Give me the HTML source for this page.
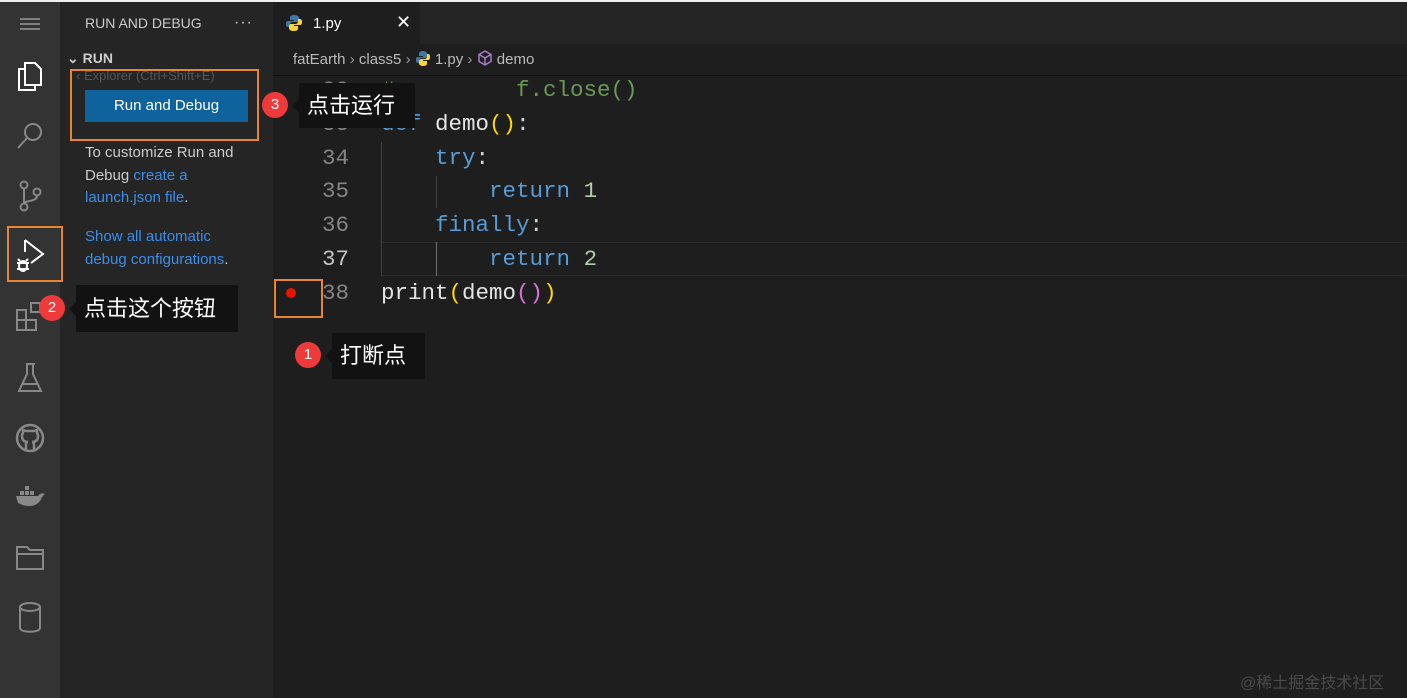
<!DOCTYPE html>
<html><head><meta charset="utf-8"><style>
*{margin:0;padding:0;box-sizing:border-box}
body{width:1407px;height:698px;overflow:hidden;background:#1e1e1e;font-family:"Liberation Sans","Noto Sans CJK SC",sans-serif;position:relative}
.top{position:absolute;left:0;top:0;width:1407px;height:2px;background:#f0f0f0}
.act{position:absolute;left:0;top:2px;width:60px;height:696px;background:#333333}
.side{position:absolute;left:60px;top:2px;width:213px;height:696px;background:#252526;color:#ccc}
.tabs{position:absolute;left:273px;top:2px;width:1134px;height:42px;background:#252526}
.tab{position:absolute;left:0;top:0;width:147px;height:42px;background:#1e1e1e;color:#fff;font-size:15px}
.crumb{position:absolute;left:293px;top:50px;color:#bbb;font-size:15px;white-space:nowrap}
.code{position:absolute;left:273px;top:76px;width:1134px;font-family:"Liberation Mono",monospace;font-size:22.5px}
.ln{position:absolute;left:0;width:76px;text-align:right;color:#858585;height:34px;line-height:34px}
.cl{position:absolute;left:108px;height:34px;line-height:34px;white-space:pre;color:#d4d4d4}
.kw{color:#569cd6}.fn{color:#e4e4e4}.y{color:#ffd700}.p{color:#da70d6}.n{color:#b5cea8}.c{color:#6a9955}
.ob{position:absolute;border:2px solid #e8862f}
.badge{position:absolute;width:26px;height:26px;border-radius:50%;background:#ee3a3a;color:#fff;font-size:15px;text-align:center;line-height:26px}
.tip{position:absolute;background:#121212;color:#fff;font-size:22px;padding:0 8px;font-family:"Liberation Sans","Noto Sans CJK SC",sans-serif}
.tip:before{content:"";position:absolute;left:-7px;top:50%;margin-top:-7px;border:7px solid transparent;border-left:0;border-right-color:#121212}
.ic{position:absolute;left:15px}
</style></head><body>
<div class="top"></div>
<div class="act">
 <svg class="ic" style="top:14px" width="30" height="16"><g stroke="#999" stroke-width="1.5"><line x1="5" y1="3" x2="25" y2="3"/><line x1="5" y1="8" x2="25" y2="8"/><line x1="5" y1="13" x2="25" y2="13"/></g></svg>
 <svg class="ic" style="top:56px" width="30" height="36" fill="none" stroke="#fff" stroke-width="2"><path d="M10 5h10l6 6v16H10z"/><path d="M10 11H4v21h16v-5"/></svg>
 <svg class="ic" style="top:116px" width="30" height="36" fill="none" stroke="#888" stroke-width="2"><circle cx="18" cy="14" r="8"/><line x1="12" y1="20" x2="3" y2="30"/></svg>
 <svg class="ic" style="top:176px" width="30" height="36" fill="none" stroke="#888" stroke-width="2"><circle cx="9" cy="7" r="3.5"/><circle cx="9" cy="29" r="3.5"/><circle cx="22" cy="14" r="3.5"/><path d="M9 11v14M22 18c0 6-13 4-13 8"/></svg>
 <svg class="ic" style="top:234px" width="34" height="40" fill="none" stroke="#fff" stroke-width="2"><path d="M10 4v12M10 4l18 14-12 9"/><ellipse cx="8" cy="30" rx="4" ry="5"/><path d="M2 27h12M2 33h12M5 25l-2-2M11 25l2-2"/></svg>
 <svg class="ic" style="top:298px" width="32" height="36" fill="none" stroke="#888" stroke-width="2"><path d="M2 10h9v10h10v10H2zM2 20h9v10"/><rect x="16" y="3" width="9" height="9"/></svg>
 <svg class="ic" style="top:358px" width="30" height="36" fill="none" stroke="#888" stroke-width="2"><path d="M11 4h9M12 4v10L4 31h22L18 14V4M7 24h16"/></svg>
 <svg class="ic" style="top:418px" width="32" height="36" fill="none" stroke="#888" stroke-width="2.5"><circle cx="15" cy="18" r="13"/><path d="M11 30v-5c0-2 1-3 2-3-4 0-6-2-6-6 0-1 0-2 1-3v-3l3 1h8l3-1v3c1 1 1 2 1 3 0 4-2 6-6 6 1 0 2 1 2 3v5"/></svg>
 <svg class="ic" style="top:480px" width="32" height="32"><path d="M1 14h22c2-3 5-3 7-2-2 1-2 3-3 3-3 9-13 12-24 6z" fill="#888"/><g fill="#888"><rect x="5" y="9" width="4" height="4"/><rect x="10" y="9" width="4" height="4"/><rect x="15" y="9" width="4" height="4"/><rect x="10" y="4" width="4" height="4"/></g></svg>
 <svg class="ic" style="top:538px" width="32" height="34" fill="none" stroke="#888" stroke-width="2"><path d="M2 7h10l3 3h13v19H2zM2 14h26"/></svg>
 <svg class="ic" style="top:598px" width="32" height="36" fill="none" stroke="#888" stroke-width="2"><ellipse cx="15" cy="7" rx="10" ry="4"/><path d="M5 7v21c0 5 20 5 20 0V7"/></svg>
</div>
<div class="side">
 <div style="position:absolute;left:25px;top:13px;font-size:14px;color:#ccc">RUN AND DEBUG</div>
 <div style="position:absolute;left:174px;top:12px;font-size:16px;color:#ccc;letter-spacing:1px">···</div>
 <div style="position:absolute;left:7px;top:48px;font-size:14px;font-weight:bold;color:#ccc">⌄ RUN</div>
 <div style="position:absolute;left:16px;top:66px;font-size:13px;color:#555">‹ Explorer (Ctrl+Shift+E)</div>
 <div style="position:absolute;left:25px;top:88px;width:163px;height:32px;background:#0e639c;color:#fff;font-size:15px;text-align:center;line-height:32px">Run and Debug</div>
 <div style="position:absolute;left:25px;top:140px;width:190px;font-size:15px;line-height:22.5px;color:#ccc;white-space:nowrap">To customize Run and<br>Debug <span style="color:#3b8eea">create a</span><br><span style="color:#3b8eea">launch.json file</span>.</div>
 <div style="position:absolute;left:25px;top:223px;width:190px;font-size:15px;line-height:23px;color:#3b8eea;white-space:nowrap">Show all automatic<br>debug configurations<span style="color:#ccc">.</span></div>
</div>
<div class="tabs"><div class="tab">
 <svg style="position:absolute;left:12px;top:12px" width="18" height="18"><path d="M9 1C5 1 5 3 5 4v2h4v1H3C1 7 1 9 1 10s0 3 2 3h2v-2c0-2 1-3 3-3h4c1 0 2-1 2-2V4c0-2-2-3-5-3z" fill="#3c78aa"/><path d="M9 17c4 0 4-2 4-3v-2H9v-1h6c2 0 2-2 2-3s0-3-2-3h-2v2c0 2-1 3-3 3H6c-1 0-2 1-2 2v2c0 2 2 3 5 3z" fill="#ffd43b"/></svg>
 <span style="position:absolute;left:40px;top:13px">1.py</span>
 <span style="position:absolute;left:123px;top:10px;font-size:18px">✕</span></div></div>
<div class="crumb">fatEarth <span style="color:#999">›</span> class5 <span style="color:#999">›</span> <svg width="16" height="16" style="vertical-align:-2px"><path d="M8 1C4 1 4 3 4 4v2h4v1H3C1 7 1 9 1 10s0 3 2 3h1v-2c0-2 1-3 3-3h3c1 0 2-1 2-2V4c0-2-2-3-4-3z" fill="#3c78aa"/><path d="M8 16c4 0 4-2 4-3v-2H8v-1h5c2 0 2-2 2-3s0-3-2-3h-1v2c0 2-1 3-3 3H6c-1 0-2 1-2 2v2c0 2 2 3 4 3z" fill="#ffd43b"/></svg> 1.py <span style="color:#999">›</span> <svg width="16" height="16" style="vertical-align:-2px" fill="none" stroke="#b180d7" stroke-width="1.4"><path d="M8 1l6 3.5v7L8 15l-6-3.5v-7zM2 4.5L8 8l6-3.5M8 8v7"/></svg> demo</div>
<div style="position:absolute;left:273px;top:75px;width:1134px;height:1px;background:#111"></div>
<div class="code">
 <div style="position:absolute;left:108px;top:166px;width:1026px;height:34px;border-top:1px solid #2a2a2a;border-bottom:1px solid #2a2a2a"></div>
 <div style="position:absolute;left:108px;top:66px;width:1px;height:134px;background:#404040"></div>
 <div style="position:absolute;left:163px;top:100px;width:1px;height:32px;background:#404040"></div>
 <div style="position:absolute;left:163px;top:166px;width:1px;height:34px;background:#707070"></div>
 <div class="ln" style="top:-3px">32</div><div class="cl c" style="top:-3px">#         f.close()</div>
 <div class="ln" style="top:31px">33</div><div class="cl" style="top:31px"><span class="kw">def</span> <span class="fn">demo</span><span class="y">()</span>:</div>
 <div class="ln" style="top:65px">34</div><div class="cl" style="top:65px">    <span class="kw">try</span>:</div>
 <div class="ln" style="top:98px">35</div><div class="cl" style="top:98px">        <span class="kw">return</span> <span class="n">1</span></div>
 <div class="ln" style="top:132px">36</div><div class="cl" style="top:132px">    <span class="kw">finally</span>:</div>
 <div class="ln" style="top:166px;color:#c6c6c6">37</div><div class="cl" style="top:166px">        <span class="kw">return</span> <span class="n">2</span></div>
 <div class="ln" style="top:200px">38</div><div class="cl" style="top:200px"><span class="fn">print</span><span class="y">(</span><span class="fn">demo</span><span class="p">()</span><span class="y">)</span></div>
</div>
<div style="position:absolute;left:286px;top:288px;width:10px;height:10px;border-radius:50%;background:#e51400"></div>
<div class="ob" style="left:7px;top:226px;width:56px;height:56px"></div>
<div class="ob" style="left:70px;top:69px;width:189px;height:72px"></div>
<div class="ob" style="left:274px;top:279px;width:49px;height:39px"></div>
<div class="badge" style="left:262px;top:92px">3</div>
<div class="tip" style="left:299px;top:83px;height:45px;line-height:45px;width:116px">点击运行</div>
<div class="badge" style="left:39px;top:295px">2</div>
<div class="tip" style="left:76px;top:285px;height:47px;line-height:47px;width:162px">点击这个按钮</div>
<div class="badge" style="left:295px;top:342px">1</div>
<div class="tip" style="left:332px;top:333px;height:46px;line-height:46px;width:93px">打断点</div>
<div style="position:absolute;left:1240px;top:669px;font-size:16px;color:#4a4a4a">@稀土掘金技术社区</div>
</body></html>
